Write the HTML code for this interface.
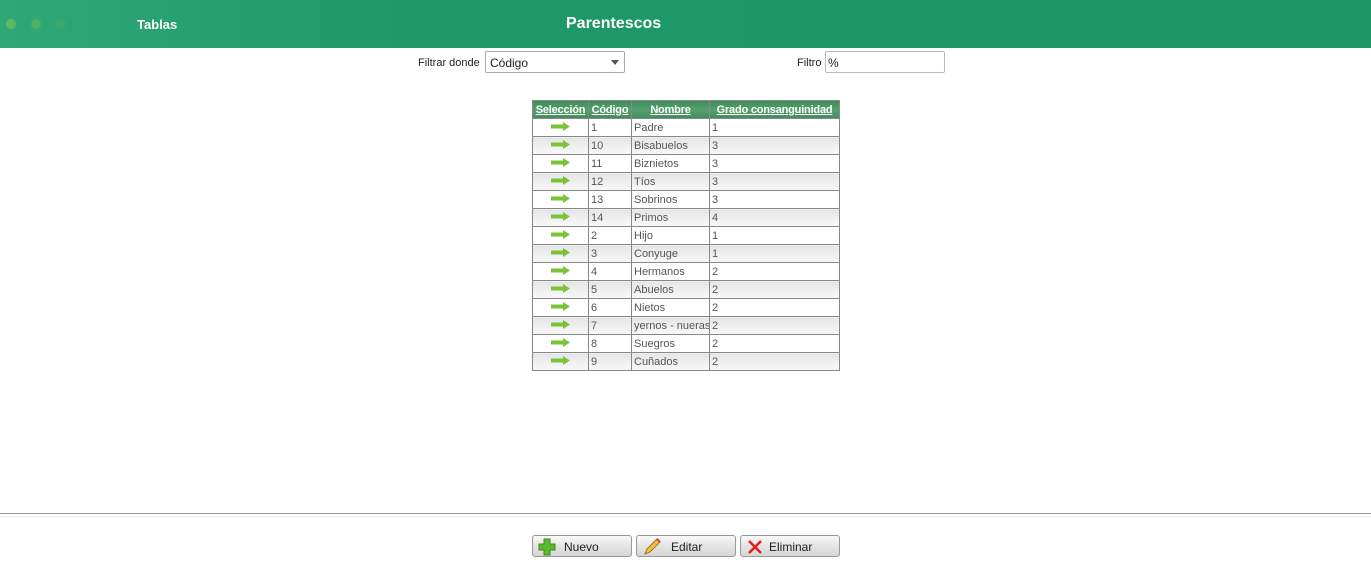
<!DOCTYPE html>
<html><head><meta charset="utf-8"><style>
*{margin:0;padding:0;box-sizing:border-box}
body{width:1371px;height:584px;background:#fff;font-family:"Liberation Sans",sans-serif;font-size:11px;color:#222;position:relative;overflow:hidden}
.hdr{position:absolute;left:0;top:0;width:1371px;height:48px;background:linear-gradient(90deg,#2fa877 0%,#27a070 15%,#1e9867 30%,#1d9666 100%)}
.dot{position:absolute;top:19px;width:10px;height:10px;border-radius:50%}
.t1{position:absolute;left:137px;top:17px;color:#fff;font-weight:bold;font-size:13px}
.t2{position:absolute;left:566px;top:15px;color:#fff;font-weight:bold;font-size:16px}
.lbl{position:absolute;top:57px;font-size:11px}
.sel{position:absolute;left:485px;top:51px;width:140px;height:22px;border:1px solid #aaa;border-radius:2px;padding:4px 4px;font-size:12px}
.inp{position:absolute;left:825px;top:51px;width:120px;height:22px;border:1px solid #bbb;border-radius:2px;padding:4px 2px;font-size:12px}
table{position:absolute;left:532px;top:100px;width:307px;table-layout:fixed;border-collapse:collapse;border:1px solid #777}
th{background:linear-gradient(#3f8d5a,#56a06c 50%,#3f8d5a);color:#fff;font-weight:bold;text-decoration:underline;height:18px;padding:0 1px;border:1px solid #888;font-size:11px;white-space:nowrap;overflow:hidden;letter-spacing:-0.2px}
td{height:18px;border:1px solid #888;padding:0 2px;color:#555;font-size:11px;white-space:nowrap;overflow:hidden}
tr.a td{background:#fff}
tr.b td{background:linear-gradient(#e6e6e6,#f8f8f8)}
td.s{text-align:center}
.line{position:absolute;left:0;top:513px;width:1371px;height:1px;background:#999}
.line2{position:absolute;left:0;top:516px;width:1371px;height:1px;background:#eee}
.btn{position:absolute;top:535px;width:100px;height:22px;border:1px solid #999;border-radius:3px;background:linear-gradient(#fafafa,#e4e4e4 50%,#d6d6d6);font-size:12px}
.btn span{position:absolute;top:4px}
.btn svg{position:absolute;left:5px;top:2px}
</style></head><body>
<div class="hdr">
<div class="dot" style="left:6px;background:#6fbd5a;opacity:.8"></div>
<div class="dot" style="left:31px;background:#63b65c;opacity:.6"></div>
<div class="dot" style="left:56px;background:#4db067;opacity:.4"></div>
<div class="t1">Tablas</div>
<div class="t2">Parentescos</div>
</div>
<div class="lbl" style="left:418px">Filtrar donde</div>
<div class="sel">Código<svg width="8" height="5" style="position:absolute;right:5px;top:8px"><path d="M0 0H8L4 5Z" fill="#555"/></svg></div>
<div class="lbl" style="left:797px">Filtro</div>
<div class="inp">%</div>
<table>
<colgroup><col style="width:56px"><col style="width:43px"><col style="width:78px"><col style="width:130px"></colgroup>
<tr><th>Selección</th><th>Código</th><th>Nombre</th><th>Grado consanguinidad</th></tr>
<tbody id="tb"></tbody>
</table>
<div class="line"></div><div class="line2"></div>
<div class="btn" style="left:532px"><svg width="18" height="18"><path d="M6 1h6v5h5v6h-5v5H6v-5H1V6h5z" fill="#5cb82e" stroke="#3d8a1a"/></svg><span style="left:31px">Nuevo</span></div>
<div class="btn" style="left:636px"><svg width="20" height="18"><path d="M3 16l2-5 10-10 3 3-10 10z" fill="#f2c040" stroke="#a07020"/><path d="M15 1l3 3" stroke="#d04040" stroke-width="2"/></svg><span style="left:34px">Editar</span></div>
<div class="btn" style="left:740px"><svg width="18" height="18"><path d="M3 3L15 15M15 3L3 15" stroke="#e02020" stroke-width="2.5"/></svg><span style="left:28px">Eliminar</span></div>
<script>
var d=[["1","Padre","1"],["10","Bisabuelos","3"],["11","Biznietos","3"],["12","Tíos","3"],["13","Sobrinos","3"],["14","Primos","4"],["2","Hijo","1"],["3","Conyuge","1"],["4","Hermanos","2"],["5","Abuelos","2"],["6","Nietos","2"],["7","yernos - nueras","2"],["8","Suegros","2"],["9","Cuñados","2"]];
var arr='<svg width="19" height="9"><path d="M0 2.5h12V0l7 4.5-7 4.5V6.5H0z" fill="#7cc23a"/></svg>';
var h="";d.forEach(function(r,i){h+='<tr class="'+(i%2?'b':'a')+'"><td class="s">'+arr+'</td><td>'+r[0]+'</td><td>'+r[1]+'</td><td>'+r[2]+'</td></tr>'});
document.getElementById("tb").innerHTML=h;
</script>
</body></html>
